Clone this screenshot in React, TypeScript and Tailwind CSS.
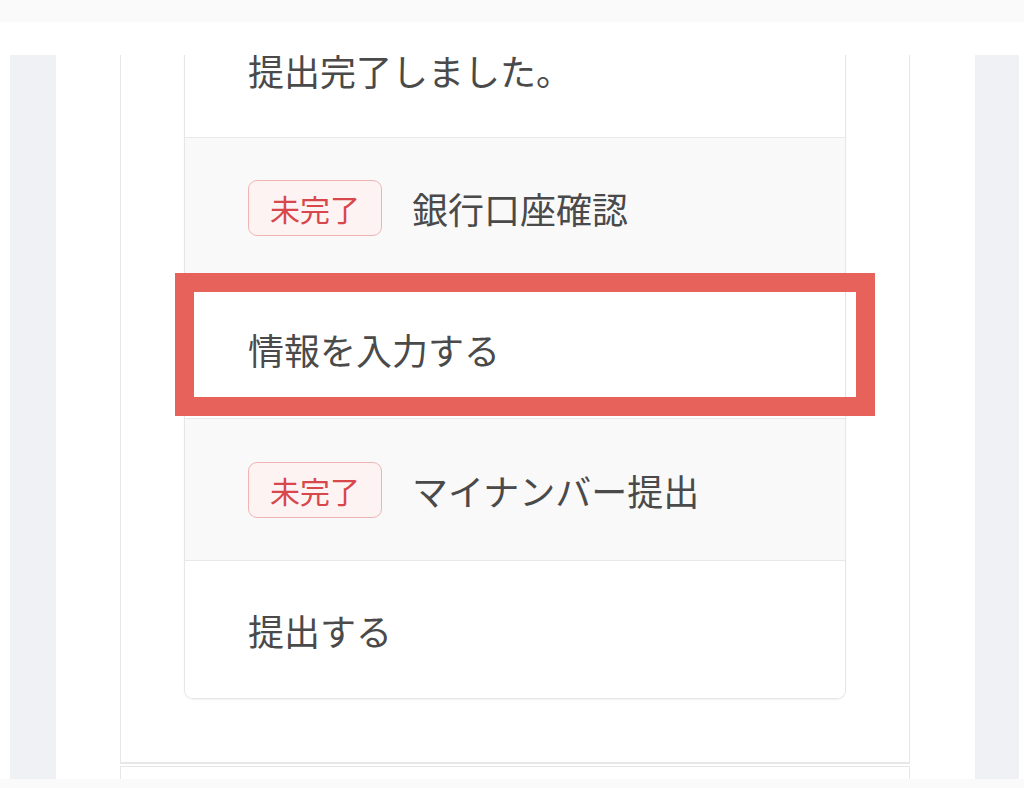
import React from 'react';

const font = '"Noto Sans CJK JP", "Noto Sans", sans-serif';

const Badge = () => (
  <span className="inline-flex items-center justify-center h-[56px] px-[21px] rounded-[9px] border-[1.5px] border-[#f1b4b4] bg-[#fdf3f3] text-[30px] leading-none text-[#d8474b]">
    未完了
  </span>
);

const TaskHeader = ({ title, className }: { title: string; className: string }) => (
  <div className={`flex items-center gap-[30px] bg-[#f9f9f9] border-t border-[#e8e8e8] pl-[63px] ${className}`}>
    <Badge />
    <span className="text-[36px] leading-none text-[#4a4a4a]">{title}</span>
  </div>
);

const ActionRow = ({ label, className }: { label: string; className: string }) => (
  <div className={`flex items-center bg-white border-t border-[#e8e8e8] pl-[63px] ${className}`}>
    <span className="text-[36px] leading-none text-[#4a4a4a]">{label}</span>
  </div>
);

export default function App() {
  return (
    <div className="w-[1024px] h-[788px] bg-white flex flex-col overflow-hidden" style={{ fontFamily: font }}>
      <div className="h-[22px] shrink-0 bg-[#fafafa]" />
      <div className="h-[33px] shrink-0 bg-white" />

      <div className="relative h-[724px] shrink-0 overflow-hidden flex">
        <div className="w-[10px] shrink-0" />
        <div className="w-[46px] shrink-0 bg-[#f0f1f5]" />
        <div className="w-[64px] shrink-0" />

        <div className="w-[790px] shrink-0 flex flex-col">
          <div className="border-x border-b-2 border-[#e7e7e7] bg-white px-[63px] pb-[63px]">
            <div className="rounded-b-[9px] border-x border-b border-[#e6e6e6] overflow-hidden shadow-[0_1px_2px_rgba(0,0,0,0.06)]">
              <div className="flex items-start h-[82px] pl-[63px] bg-white">
                <span className="text-[36px] leading-[30px] text-[#4a4a4a]">提出完了しました。</span>
              </div>
              <TaskHeader title="銀行口座確認" className="h-[141px]" />
              <ActionRow label="情報を入力する" className="h-[140px]" />
              <TaskHeader title="マイナンバー提出" className="h-[142px]" />
              <ActionRow label="提出する" className="h-[138px]" />
            </div>
          </div>
          <div className="mt-[2px] flex-1 border-x border-t border-[#e7e7e7] bg-white" />
        </div>

        <div className="w-[65px] shrink-0" />
        <div className="w-[44px] shrink-0 bg-[#f0f1f5]" />

        {/* annotation highlight */}
        <div className="absolute left-[175px] top-[218px] w-[700px] h-[143px] border-[19px] border-[#e8625c]" />
      </div>

      <div className="flex-1 bg-[#fafafa]" />
    </div>
  );
}
